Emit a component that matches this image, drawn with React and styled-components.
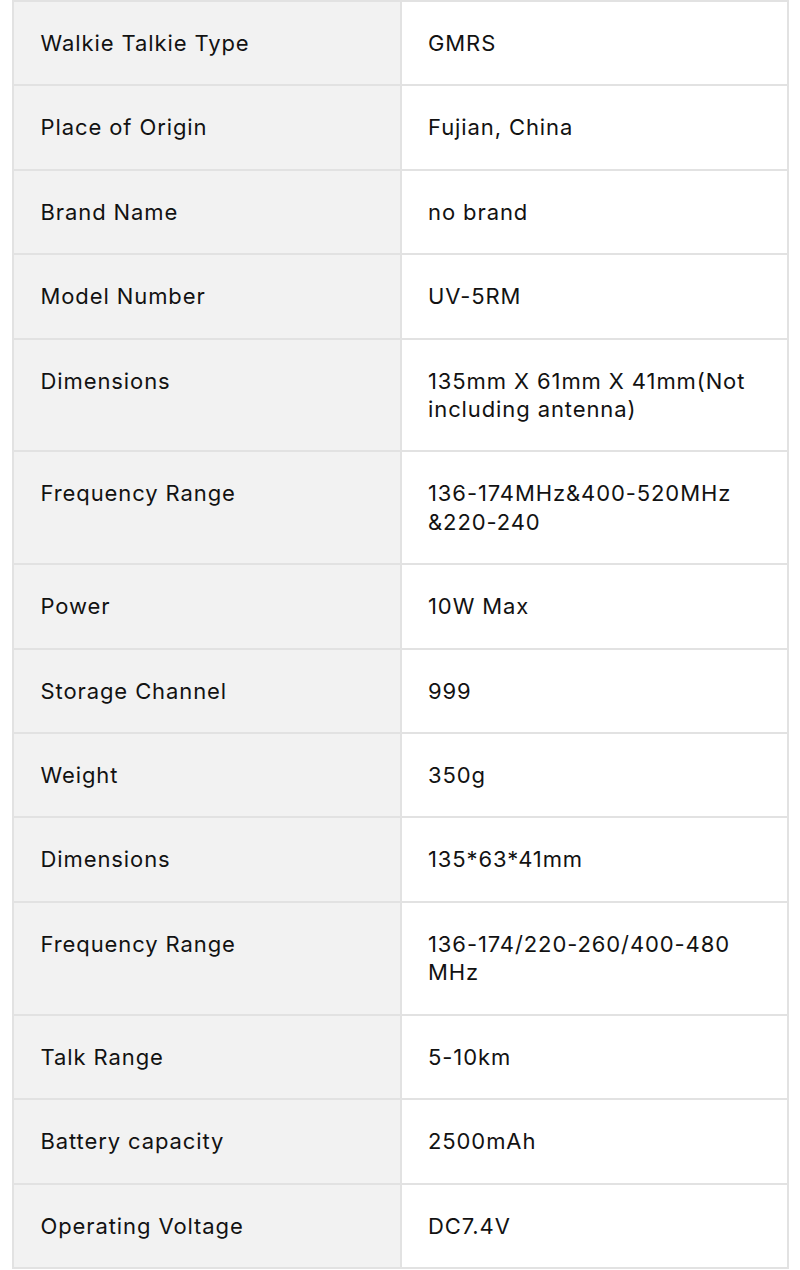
import React from "react";
import styled, { createGlobalStyle } from "styled-components";

const Global = createGlobalStyle`
  html, body { margin: 0; padding: 0; background: #ffffff; }
  body { font-family: Inter, "Liberation Sans", Arial, sans-serif; }
`;

const Page = styled.div`
  padding: 0 11px 0 12px;
  width: 800px;
  box-sizing: border-box;
`;

const Table = styled.table`
  width: 777px;
  border-collapse: collapse;
  table-layout: fixed;
  border: 2px solid #e2e2e2;
`;

const Row = styled.tr`
  border-bottom: 2px solid #e2e2e2;
`;

const Cell = styled.td`
  box-sizing: border-box;
  width: 50%;
  background: ${(p) => (p.$label ? "#f2f2f2" : "#ffffff")};
  border-right: ${(p) => (p.$label ? "2px solid #e2e2e2" : "none")};
  padding: 27px 20px 27px 26.5px;
  vertical-align: top;
  font-size: 22px;
  line-height: 28.4px;
  color: #121212;
  letter-spacing: 0.9px;
`;

const Line = styled.div`
  white-space: nowrap;
`;

const specs = [
  ["Walkie Talkie Type", ["GMRS"]],
  ["Place of Origin", ["Fujian, China"]],
  ["Brand Name", ["no brand"]],
  ["Model Number", ["UV-5RM"]],
  ["Dimensions", ["135mm X 61mm X 41mm(Not", "including antenna)"]],
  ["Frequency Range", ["136-174MHz&400-520MHz", "&220-240"]],
  ["Power", ["10W Max"]],
  ["Storage Channel", ["999"]],
  ["Weight", ["350g"]],
  ["Dimensions", ["135*63*41mm"]],
  ["Frequency Range", ["136-174/220-260/400-480", "MHz"]],
  ["Talk Range", ["5-10km"]],
  ["Battery capacity", ["2500mAh"]],
  ["Operating Voltage", ["DC7.4V"]],
];

export default function App() {
  return (
    <>
      <Global />
      <Page>
        <Table>
          <tbody>
            {specs.map(([label, value], i) => (
              <Row key={i}>
                <Cell $label>{label}</Cell>
                <Cell>
                  {value.map((l, j) => (
                    <Line key={j}>{l}</Line>
                  ))}
                </Cell>
              </Row>
            ))}
          </tbody>
        </Table>
      </Page>
    </>
  );
}
